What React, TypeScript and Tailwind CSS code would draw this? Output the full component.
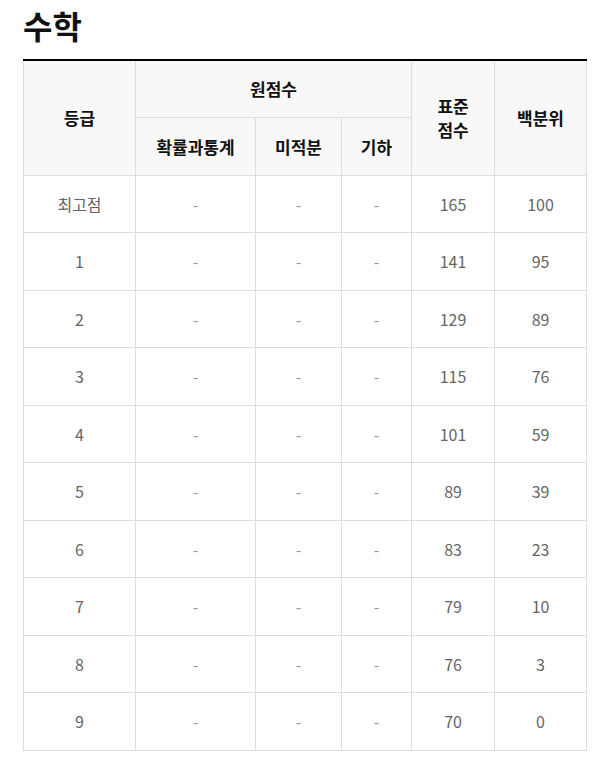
const rows = [
  { grade: '최고점', std: '165', pct: '100' },
  { grade: '1', std: '141', pct: '95' },
  { grade: '2', std: '129', pct: '89' },
  { grade: '3', std: '115', pct: '76' },
  { grade: '4', std: '101', pct: '59' },
  { grade: '5', std: '89', pct: '39' },
  { grade: '6', std: '83', pct: '23' },
  { grade: '7', std: '79', pct: '10' },
  { grade: '8', std: '76', pct: '3' },
  { grade: '9', std: '70', pct: '0' },
]

const th = 'border border-[#dddddd] bg-[#f8f8f8] text-[17px] font-bold text-[#111] text-center align-middle'
const td = 'border border-[#dddddd] h-[57.5px] text-[16px] text-[#666] text-center align-middle'

export default function App() {
  return (
    <div
      className="bg-white px-[23px] pt-[1px]"
      style={{ fontFamily: '"Noto Sans CJK KR", "Noto Sans", sans-serif' }}
    >
      <h1 className="text-[32px] font-semibold leading-[48px] text-[#111]">수학</h1>
      <table className="mt-[10px] w-[563px] table-fixed border-collapse border-t-2 border-t-black">
        <colgroup>
          <col className="w-[112px]" />
          <col className="w-[120px]" />
          <col className="w-[86px]" />
          <col className="w-[70px]" />
          <col className="w-[83px]" />
          <col className="w-[92px]" />
        </colgroup>
        <thead>
          <tr className="h-[57.5px]">
            <th rowSpan={2} className={th + ' border-t-black'}>등급</th>
            <th colSpan={3} className={th + ' border-t-black'}>원점수</th>
            <th rowSpan={2} className={th + ' border-t-black'}>
              <span className="block leading-[24px]">표준</span>
              <span className="block leading-[24px]">점수</span>
            </th>
            <th rowSpan={2} className={th + ' border-t-black'}>백분위</th>
          </tr>
          <tr className="h-[57.5px]">
            <th className={th}>확률과통계</th>
            <th className={th}>미적분</th>
            <th className={th}>기하</th>
          </tr>
        </thead>
        <tbody>
          {rows.map((r) => (
            <tr key={r.grade}>
              <td className={td}>{r.grade}</td>
              <td className={td + ' text-[#999]'}>-</td>
              <td className={td + ' text-[#999]'}>-</td>
              <td className={td + ' text-[#999]'}>-</td>
              <td className={td}>{r.std}</td>
              <td className={td}>{r.pct}</td>
            </tr>
          ))}
        </tbody>
      </table>
    </div>
  )
}
